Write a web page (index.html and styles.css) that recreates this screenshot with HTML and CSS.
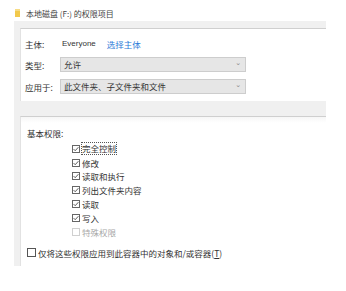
FILE: index.html
```html
<!DOCTYPE html>
<html>
<head>
<meta charset="utf-8">
<link rel="stylesheet" href="styles.css">
</head>
<body>
<div class="title">
  <svg class="folder" width="5" height="8" viewBox="0 0 5 8"><rect x="0" y="0" width="5" height="8" fill="#f2c94c"/><rect x="0" y="0" width="5" height="2" fill="#f7dc85"/></svg>
  <span>本地磁盘 (F:) 的权限项目</span>
</div>
<div class="frame">
  <div class="panel top">
    <div class="grid">
      <div class="lbl">主体:</div>
      <div class="val"><span class="who">Everyone</span><span class="link">选择主体</span></div>
      <div class="lbl">类型:</div>
      <div class="select"><span>允许</span><span class="chev">⌄</span></div>
      <div class="lbl">应用于:</div>
      <div class="select"><span>此文件夹、子文件夹和文件</span><span class="chev">⌄</span></div>
    </div>
  </div>
  <div class="panel bottom">
    <div class="heading">基本权限:</div>
    <ul class="perms">
      <li><svg class="cb" viewBox="0 0 8 8"><rect x="0.5" y="0.5" width="7" height="7" fill="#fff" stroke="#666"/><path d="M1.6 4.1 L3.2 5.7 L6.4 2.2" fill="none" stroke="#333" stroke-width="0.8"/></svg><span class="focus">完全控制</span></li>
      <li><svg class="cb" viewBox="0 0 8 8"><rect x="0.5" y="0.5" width="7" height="7" fill="#fff" stroke="#666"/><path d="M1.6 4.1 L3.2 5.7 L6.4 2.2" fill="none" stroke="#333" stroke-width="0.8"/></svg><span>修改</span></li>
      <li><svg class="cb" viewBox="0 0 8 8"><rect x="0.5" y="0.5" width="7" height="7" fill="#fff" stroke="#666"/><path d="M1.6 4.1 L3.2 5.7 L6.4 2.2" fill="none" stroke="#333" stroke-width="0.8"/></svg><span>读取和执行</span></li>
      <li><svg class="cb" viewBox="0 0 8 8"><rect x="0.5" y="0.5" width="7" height="7" fill="#fff" stroke="#666"/><path d="M1.6 4.1 L3.2 5.7 L6.4 2.2" fill="none" stroke="#333" stroke-width="0.8"/></svg><span>列出文件夹内容</span></li>
      <li><svg class="cb" viewBox="0 0 8 8"><rect x="0.5" y="0.5" width="7" height="7" fill="#fff" stroke="#666"/><path d="M1.6 4.1 L3.2 5.7 L6.4 2.2" fill="none" stroke="#333" stroke-width="0.8"/></svg><span>读取</span></li>
      <li><svg class="cb" viewBox="0 0 8 8"><rect x="0.5" y="0.5" width="7" height="7" fill="#fff" stroke="#666"/><path d="M1.6 4.1 L3.2 5.7 L6.4 2.2" fill="none" stroke="#333" stroke-width="0.8"/></svg><span>写入</span></li>
      <li class="disabled"><svg class="cb" viewBox="0 0 8 8"><rect x="0.5" y="0.5" width="7" height="7" fill="#fff" stroke="#d0d0d0"/></svg><span>特殊权限</span></li>
    </ul>
    <div class="only"><svg class="cb big" viewBox="0 0 9 9"><rect x="0.5" y="0.5" width="8" height="8" fill="#fff" stroke="#555"/></svg><span>仅将这些权限应用到此容器中的对象和/或容器(<u>T</u>)</span></div>
  </div>
</div>
</body>
</html>
```
FILE: styles.css
```css
html, body {
  margin: 0;
  padding: 0;
  background: #fff;
}
body {
  width: 346px;
  height: 291px;
  overflow: hidden;
  font-family: "Noto Sans CJK SC", "Noto Sans", sans-serif;
  font-size: 8.5px;
  color: #333;
}
.title {
  display: flex;
  align-items: center;
  height: 12px;
  padding: 7px 0 0 15px;
  gap: 6px;
  font-size: 8px;
  color: #444;
}
.folder { display: block; }
.frame {
  margin: 2px 0 0 14px;
  width: 312px;
  background: #f0f0f0;
  padding-top: 7px;
}
.panel {
  margin-left: 6px;
  background: #fff;
  border-top: 1px solid #cfcfcf;
  border-left: 1px solid #e2e2e2;
}
.panel.top {
  height: 73px;
  box-sizing: border-box;
  padding: 9px 0 0 4px;
}
.grid {
  display: grid;
  grid-template-columns: 35px 186px;
  row-gap: 7px;
  align-items: center;
}
.grid .lbl { line-height: 12px; }
.val { line-height: 12px; padding-left: 2px; display: flex; gap: 11px; }
.who { font-family: "Liberation Sans", "Noto Sans", sans-serif; font-size: 8px; }
.link { color: #2a7ad8; }
.select {
  height: 15px;
  box-sizing: border-box;
  background: #e6e6e6;
  border: 1px solid #cdcdcd;
  display: flex;
  align-items: center;
  justify-content: space-between;
  padding: 0 4px 0 3px;
  line-height: 13px;
}
.chev {
  color: #888;
  font-family: "DejaVu Sans", sans-serif;
  font-size: 7px;
  line-height: 7px;
  margin-top: -3px;
}
.panel.bottom {
  margin-top: 15px;
  height: 150px;
  box-sizing: border-box;
  padding: 10px 0 0 6px;
  background: linear-gradient(#f6f6f6, #fff 6px);
}
.heading { line-height: 12px; }
.perms {
  list-style: none;
  margin: 3px 0 0 45px;
  padding: 0;
}
.perms li {
  display: flex;
  align-items: center;
  height: 13.8px;
  gap: 2px;
}
.cb {
  width: 8px;
  height: 8px;
  flex: none;
  display: block;
}
.cb.big { width: 9px; height: 9px; }
.disabled { color: #a8a8a8; }
.focus {
  outline: 1px dotted #555;
  outline-offset: 0;
  line-height: 11px;
}
.only {
  display: flex;
  align-items: center;
  gap: 2px;
  margin-top: 8px;
  line-height: 12px;
}
```
